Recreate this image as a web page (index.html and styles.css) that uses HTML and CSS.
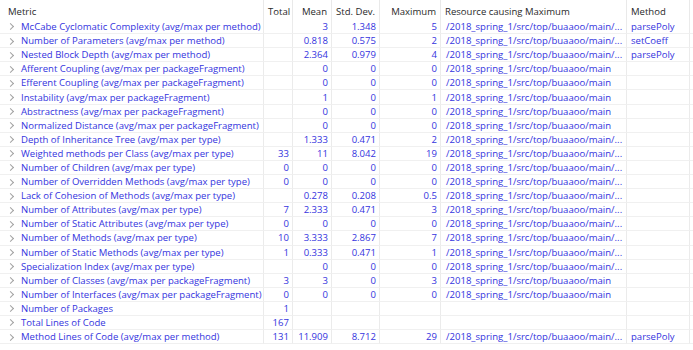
FILE: index.html
```html
<!DOCTYPE html>
<html lang="en">
<head>
    <meta charset="UTF-8">
    <title>Metrics</title>
    <link rel="stylesheet" href="styles.css">
</head>
<body>
    <table class="metrics">
        <colgroup>
            <col class="c-metric">
            <col class="c-total">
            <col class="c-mean">
            <col class="c-std">
            <col class="c-max">
            <col class="c-res">
            <col class="c-method">
            <col class="c-fill">
        </colgroup>
        <thead>
            <tr>
                <th class="metric-head">Metric</th>
                <th class="num">Total</th>
                <th class="num">Mean</th>
                <th class="num">Std. Dev.</th>
                <th class="num">Maximum</th>
                <th class="res">Resource causing Maximum</th>
                <th class="method">Method</th>
                <th class="fill"></th>
            </tr>
        </thead>
        <tbody>
            <tr><td class="metric">McCabe Cyclomatic Complexity (avg/max per method)</td><td class="num"></td><td class="num">3</td><td class="num">1.348</td><td class="num">5</td><td class="res">/2018_spring_1/src/top/buaaoo/main/...</td><td class="method">parsePoly</td><td class="fill"></td></tr>
            <tr><td class="metric">Number of Parameters (avg/max per method)</td><td class="num"></td><td class="num">0.818</td><td class="num">0.575</td><td class="num">2</td><td class="res">/2018_spring_1/src/top/buaaoo/main/...</td><td class="method">setCoeff</td><td class="fill"></td></tr>
            <tr><td class="metric">Nested Block Depth (avg/max per method)</td><td class="num"></td><td class="num">2.364</td><td class="num">0.979</td><td class="num">4</td><td class="res">/2018_spring_1/src/top/buaaoo/main/...</td><td class="method">parsePoly</td><td class="fill"></td></tr>
            <tr><td class="metric">Afferent Coupling (avg/max per packageFragment)</td><td class="num"></td><td class="num">0</td><td class="num">0</td><td class="num">0</td><td class="res">/2018_spring_1/src/top/buaaoo/main</td><td class="method"></td><td class="fill"></td></tr>
            <tr><td class="metric">Efferent Coupling (avg/max per packageFragment)</td><td class="num"></td><td class="num">0</td><td class="num">0</td><td class="num">0</td><td class="res">/2018_spring_1/src/top/buaaoo/main</td><td class="method"></td><td class="fill"></td></tr>
            <tr><td class="metric">Instability (avg/max per packageFragment)</td><td class="num"></td><td class="num">1</td><td class="num">0</td><td class="num">1</td><td class="res">/2018_spring_1/src/top/buaaoo/main</td><td class="method"></td><td class="fill"></td></tr>
            <tr><td class="metric">Abstractness (avg/max per packageFragment)</td><td class="num"></td><td class="num">0</td><td class="num">0</td><td class="num">0</td><td class="res">/2018_spring_1/src/top/buaaoo/main</td><td class="method"></td><td class="fill"></td></tr>
            <tr><td class="metric">Normalized Distance (avg/max per packageFragment)</td><td class="num"></td><td class="num">0</td><td class="num">0</td><td class="num">0</td><td class="res">/2018_spring_1/src/top/buaaoo/main</td><td class="method"></td><td class="fill"></td></tr>
            <tr><td class="metric">Depth of Inheritance Tree (avg/max per type)</td><td class="num"></td><td class="num">1.333</td><td class="num">0.471</td><td class="num">2</td><td class="res">/2018_spring_1/src/top/buaaoo/main/...</td><td class="method"></td><td class="fill"></td></tr>
            <tr><td class="metric">Weighted methods per Class (avg/max per type)</td><td class="num">33</td><td class="num">11</td><td class="num">8.042</td><td class="num">19</td><td class="res">/2018_spring_1/src/top/buaaoo/main/...</td><td class="method"></td><td class="fill"></td></tr>
            <tr><td class="metric">Number of Children (avg/max per type)</td><td class="num">0</td><td class="num">0</td><td class="num">0</td><td class="num">0</td><td class="res">/2018_spring_1/src/top/buaaoo/main/...</td><td class="method"></td><td class="fill"></td></tr>
            <tr><td class="metric">Number of Overridden Methods (avg/max per type)</td><td class="num">0</td><td class="num">0</td><td class="num">0</td><td class="num">0</td><td class="res">/2018_spring_1/src/top/buaaoo/main/...</td><td class="method"></td><td class="fill"></td></tr>
            <tr><td class="metric">Lack of Cohesion of Methods (avg/max per type)</td><td class="num"></td><td class="num">0.278</td><td class="num">0.208</td><td class="num">0.5</td><td class="res">/2018_spring_1/src/top/buaaoo/main/...</td><td class="method"></td><td class="fill"></td></tr>
            <tr><td class="metric">Number of Attributes (avg/max per type)</td><td class="num">7</td><td class="num">2.333</td><td class="num">0.471</td><td class="num">3</td><td class="res">/2018_spring_1/src/top/buaaoo/main/...</td><td class="method"></td><td class="fill"></td></tr>
            <tr><td class="metric">Number of Static Attributes (avg/max per type)</td><td class="num">0</td><td class="num">0</td><td class="num">0</td><td class="num">0</td><td class="res">/2018_spring_1/src/top/buaaoo/main/...</td><td class="method"></td><td class="fill"></td></tr>
            <tr><td class="metric">Number of Methods (avg/max per type)</td><td class="num">10</td><td class="num">3.333</td><td class="num">2.867</td><td class="num">7</td><td class="res">/2018_spring_1/src/top/buaaoo/main/...</td><td class="method"></td><td class="fill"></td></tr>
            <tr><td class="metric">Number of Static Methods (avg/max per type)</td><td class="num">1</td><td class="num">0.333</td><td class="num">0.471</td><td class="num">1</td><td class="res">/2018_spring_1/src/top/buaaoo/main/...</td><td class="method"></td><td class="fill"></td></tr>
            <tr><td class="metric">Specialization Index (avg/max per type)</td><td class="num"></td><td class="num">0</td><td class="num">0</td><td class="num">0</td><td class="res">/2018_spring_1/src/top/buaaoo/main/...</td><td class="method"></td><td class="fill"></td></tr>
            <tr><td class="metric">Number of Classes (avg/max per packageFragment)</td><td class="num">3</td><td class="num">3</td><td class="num">0</td><td class="num">3</td><td class="res">/2018_spring_1/src/top/buaaoo/main</td><td class="method"></td><td class="fill"></td></tr>
            <tr><td class="metric">Number of Interfaces (avg/max per packageFragment)</td><td class="num">0</td><td class="num">0</td><td class="num">0</td><td class="num">0</td><td class="res">/2018_spring_1/src/top/buaaoo/main</td><td class="method"></td><td class="fill"></td></tr>
            <tr><td class="metric">Number of Packages</td><td class="num">1</td><td class="num"></td><td class="num"></td><td class="num"></td><td class="res"></td><td class="method"></td><td class="fill"></td></tr>
            <tr><td class="metric">Total Lines of Code</td><td class="num">167</td><td class="num"></td><td class="num"></td><td class="num"></td><td class="res"></td><td class="method"></td><td class="fill"></td></tr>
            <tr><td class="metric">Method Lines of Code (avg/max per method)</td><td class="num">131</td><td class="num">11.909</td><td class="num">8.712</td><td class="num">29</td><td class="res">/2018_spring_1/src/top/buaaoo/main/...</td><td class="method">parsePoly</td><td class="fill"></td></tr>
        </tbody>
    </table>
</body>
</html>
```

FILE: styles.css
```css
* {
    box-sizing: border-box;
}

body {
    margin: 0;
    background: #fff;
    font-family: "Open Sans", "Noto Sans", sans-serif;
    font-size: 9.55px;
    color: #3434de;
    overflow: hidden;
}

.metrics {
    width: 693px;
    table-layout: fixed;
    border-collapse: separate;
    border-spacing: 0;
}

.c-metric { width: 264px; }
.c-total { width: 29px; }
.c-mean { width: 39px; }
.c-std { width: 48px; }
.c-max { width: 61px; }
.c-res { width: 186px; }
.c-method { width: 63px; }
.c-fill { width: 3px; }

.metrics th {
    height: 20px;
    padding: 3px 4px 0 4px;
    font-weight: normal;
    text-align: left;
    color: #2a2a2a;
    white-space: nowrap;
    overflow: hidden;
    border-right: 1px solid #e9e9e9;
}

.metrics th.metric-head {
    padding-left: 8px;
}

.metrics td {
    height: 14.1px;
    padding: 0 3px;
    line-height: 13px;
    white-space: nowrap;
    overflow: hidden;
    border-right: 1px solid #ebebeb;
    border-bottom: 1px solid #f0f0f0;
}

.metrics th.fill,
.metrics td.fill {
    border-right: none;
}

.metrics .num {
    text-align: right;
}

.metrics td.res {
    padding-left: 5px;
}

.metrics th.method,
.metrics td.method {
    padding-left: 4px;
}

.metrics td.metric {
    padding-left: 0;
}

.metrics td.metric::before {
    content: "";
    display: inline-block;
    width: 4px;
    height: 4px;
    margin: 0 8px 1px 8px;
    border-top: 1px solid #a2a2a2;
    border-right: 1px solid #a2a2a2;
    transform: rotate(45deg);
    vertical-align: middle;
}
```
